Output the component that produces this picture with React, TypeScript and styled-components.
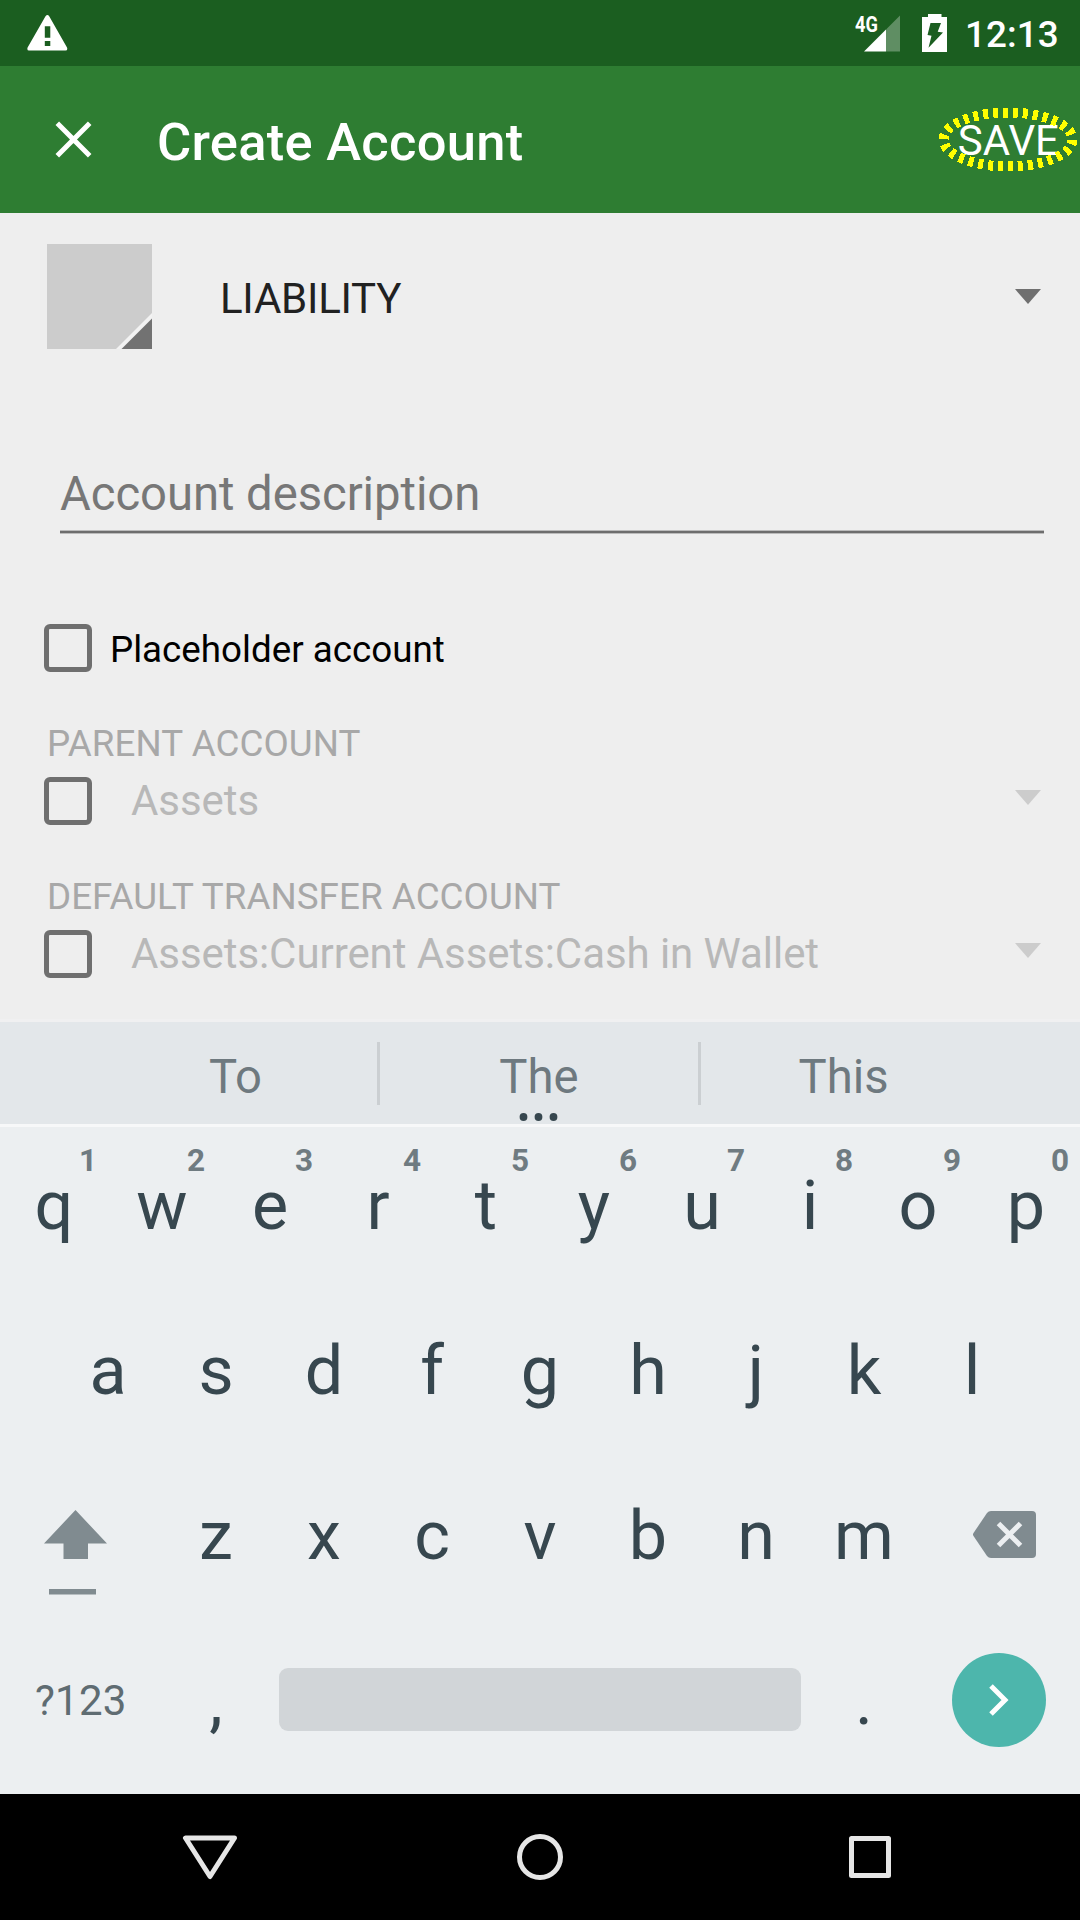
import React from "react";
import styled, { createGlobalStyle } from "styled-components";

const Global = createGlobalStyle`
  * { box-sizing: border-box; }
  body { margin: 0; background: #eeeeee; }
  svg { display: block; flex: none; }
`;

const Screen = styled.div`
  width: 1080px;
  height: 1920px;
  display: flex;
  flex-direction: column;
  overflow: hidden;
  background: #eeeeee;
  font-family: Roboto, "Noto Sans", sans-serif;
  white-space: nowrap;
`;

const StatusBar = styled.header`
  height: 66px;
  display: flex;
  align-items: flex-start;
  justify-content: space-between;
  padding: 0 22px 0 27px;
  background: #1b5e20;
  color: #fff;
`;

const StatusIcons = styled.div`
  display: flex;
  align-items: flex-start;
`;

const Network = styled.span`
  width: 9px;
  padding-top: 11px;
  font-size: 22.5px;
  line-height: 26px;
  font-weight: 700;
  transform: scaleX(0.81);
  transform-origin: left;
`;

const Clock = styled.span`
  margin-left: 18px;
  width: 93px;
  line-height: 69px;
  font-size: 36.75px;
  font-weight: 500;
  letter-spacing: 0.1px;
`;

const AppBar = styled.div`
  height: 147px;
  display: flex;
  align-items: center;
  padding: 0 21px 0 55px;
  background: #2e7d32;
  color: #fff;
`;

const Title = styled.h1`
  flex: 1;
  margin: 0 0 0 65px;
  padding-top: 4px;
  font-size: 52.5px;
  line-height: 62px;
  font-weight: 500;
  letter-spacing: 0.26px;
`;

const SaveButton = styled.button`
  position: relative;
  border: 0;
  padding: 2px 0 0;
  background: none;
  color: #fff;
  font: 400 42px/50px Roboto, sans-serif;
`;

const Highlight = styled.svg`
  position: absolute;
  left: -20px;
  top: -7px;
  overflow: visible;
  pointer-events: none;
`;

const Form = styled.main`
  height: 806px;
  display: flex;
  flex-direction: column;
  padding: 31px 36px 0 44px;
`;

const TypeRow = styled.div`
  height: 105px;
  display: flex;
  align-items: center;
  padding-left: 3px;
`;

const TypeLabel = styled.span`
  flex: 1;
  margin-left: 68px;
  padding-top: 4px;
  font-size: 42px;
  line-height: 50px;
  letter-spacing: -0.25px;
  color: #212121;
`;

const CaretBox = styled.span<{ $raise?: number; $faded?: boolean }>`
  margin-right: 3px;
  padding-bottom: ${(p) => p.$raise ?? 0}px;
  color: ${(p) => (p.$faded ? "#cccccc" : "#6f6f6f")};
`;

const DescriptionField = styled.div`
  margin: 111px 0 0 16px;
  width: 984px;
  height: 74px;
  font-size: 47.25px;
  line-height: 68px;
  letter-spacing: -0.06px;
  color: #777777;
  background:
    linear-gradient(#6d6d6d, #6d6d6d) 0 71px / 100% 2px no-repeat,
    linear-gradient(#bbbbbb, #bbbbbb) 0 70px / 100% 4px no-repeat;
`;

const CheckRow = styled.div<{ $gap: number }>`
  height: 48px;
  margin-top: ${(p) => p.$gap}px;
  display: flex;
  align-items: center;
`;

const Checkbox = styled.span`
  width: 48px;
  height: 48px;
  border: 5px solid #6f6f6f;
  border-radius: 6px;
`;

const PlaceholderLabel = styled.span`
  margin-left: 18px;
  padding-top: 3px;
  font-size: 36.75px;
  line-height: 44px;
  color: #000;
`;

const SectionLabel = styled.div<{ $gap: number }>`
  height: 44px;
  margin: ${(p) => p.$gap}px 0 0 3px;
  font-size: 36.75px;
  line-height: 46px;
  letter-spacing: 0.06px;
  color: #a8a8a8;
`;

const AccountName = styled.span`
  flex: 1;
  margin-left: 39px;
  font-size: 42px;
  line-height: 50px;
  letter-spacing: -0.07px;
  color: #b8b8b8;
`;

const Keyboard = styled.section`
  height: 775px;
  display: flex;
  flex-direction: column;
  background: #eceff1;
`;

const Suggestions = styled.div`
  height: 108px;
  display: flex;
  align-items: center;
  padding: 0 94px;
  border-top: 3px solid #f0f0f1;
  border-bottom: 3px solid #f7f8f9;
  background: #e3e7ea;
`;

const Suggestion = styled.span<{ $width: number }>`
  position: relative;
  width: ${(p) => p.$width}px;
  padding-top: 7px;
  text-align: center;
  font-size: 47.25px;
  line-height: 56px;
  color: #6e797f;
`;

const MoreDots = styled.svg`
  position: absolute;
  left: calc(50% - 20px);
  top: 70px;
`;

const Divider = styled.span`
  width: 3px;
  height: 63px;
  background: #cbcfd2;
`;

const KeyRow = styled.div<{ $inset?: number }>`
  height: 165px;
  display: flex;
  padding: 0 ${(p) => p.$inset ?? 0}px;
`;

const Key = styled.span`
  position: relative;
  width: 108px;
  text-align: center;
  font-size: 68.25px;
  line-height: 159px;
  color: #37474f;
`;

const Hint = styled.sup`
  position: absolute;
  top: 15px;
  right: 11px;
  font-size: 31.5px;
  line-height: 38px;
  font-weight: 700;
  color: #6f7b81;
`;

const WideKey = styled.span<{ $top: number; $left: number }>`
  width: 162px;
  padding: ${(p) => p.$top}px 0 0 ${(p) => p.$left}px;
`;

const SymbolsKey = styled(WideKey)`
  font-size: 42px;
  line-height: 50px;
  letter-spacing: 0.25px;
  color: #5f6c72;
`;

const SpaceKey = styled.span`
  width: 522px;
  height: 63px;
  margin: 46px 9px 0;
  border-radius: 9px;
  background: #d1d5d8;
`;

const EnterKey = styled.span`
  width: 94px;
  height: 94px;
  margin: 31px 0 0 34px;
  display: flex;
  align-items: center;
  justify-content: center;
  border-radius: 50%;
  background: #4db6ac;
`;

const NavBar = styled.nav`
  height: 126px;
  display: grid;
  grid-template-columns: 60px 60px 60px;
  align-items: center;
  justify-content: center;
  column-gap: 270px;
  background: #000;
`;

const Caret = ({ raise, faded }: { raise?: number; faded?: boolean }) => (
  <CaretBox $raise={raise} $faded={faded}>
    <svg width="26" height="15" viewBox="0 0 26 15">
      <path d="M0 0h26L13 15z" fill="currentColor" />
    </svg>
  </CaretBox>
);

const accounts = [
  { label: "PARENT ACCOUNT", value: "Assets", gap: 49 },
  { label: "DEFAULT TRANSFER ACCOUNT", value: "Assets:Current Assets:Cash in Wallet", gap: 49 },
];

export default function App() {
  return (
    <Screen>
      <Global />
      <StatusBar>
        <svg width="41" height="66" viewBox="0 0 41 66">
          <path
            fill="#fff"
            fillRule="evenodd"
            d="M18.5 16.2Q20.5 13.6 22.2 16.2L40 47.5Q41 50.5 38.5 50.5H2Q-.3 50.5.6 47.5zM17.8 26.3v11.4h5.5V26.3zM17.8 41v5h5.5v-5z"
          />
        </svg>
        <StatusIcons>
          <Network>4G</Network>
          <svg width="36" height="66" viewBox="0 0 36 66">
            <path d="M22 29.5L36.5 15v36.5H22z" fill="#fff" opacity=".3" />
            <path d="M0 51.5L22 29.5v22z" fill="#fff" />
          </svg>
          <svg width="47" height="66" viewBox="0 0 47 66">
            <path
              fill="#fff"
              fillRule="evenodd"
              d="M28 14h13.5v3H47v35H22V17h6zM30.5 23l-3 12 4 .7-3 12L43 32.5l-5.3-.8L41 23z"
            />
          </svg>
          <Clock>12:13</Clock>
        </StatusIcons>
      </StatusBar>

      <AppBar>
        <svg width="37" height="37" viewBox="0 0 37 37">
          <path d="M2.3 2.3l32.4 32.4M34.7 2.3L2.3 34.7" stroke="#fff" strokeWidth="5" />
        </svg>
        <Title>Create Account</Title>
        <SaveButton>
          SAVE
          <Highlight width="140" height="66" viewBox="0 0 140 66">
            <ellipse
              cx="70"
              cy="32.5"
              rx="64.5"
              ry="27"
              fill="none"
              stroke="#ffff00"
              strokeWidth="10"
              pathLength="300"
              strokeDasharray="5 5"
              shapeRendering="crispEdges"
            />
          </Highlight>
        </SaveButton>
      </AppBar>

      <Form>
        <TypeRow>
          <svg width="105" height="105" viewBox="0 0 105 105">
            <path d="M0 0h105v105H0z" fill="#cccccc" />
            <path d="M105 69v36H69z" fill="#f2f2f2" />
            <path d="M105 74.5V105H74.5z" fill="#727272" />
          </svg>
          <TypeLabel>LIABILITY</TypeLabel>
          <Caret />
        </TypeRow>
        <DescriptionField>Account description</DescriptionField>
        <CheckRow $gap={90}>
          <Checkbox />
          <PlaceholderLabel>Placeholder account</PlaceholderLabel>
        </CheckRow>
        {accounts.map((a) => (
          <React.Fragment key={a.label}>
            <SectionLabel $gap={a.gap}>{a.label}</SectionLabel>
            <CheckRow $gap={12}>
              <Checkbox />
              <AccountName>{a.value}</AccountName>
              <Caret raise={8} faded />
            </CheckRow>
          </React.Fragment>
        ))}
      </Form>

      <Keyboard>
        <Suggestions>
          <Suggestion $width={283}>To</Suggestion>
          <Divider />
          <Suggestion $width={318}>
            The
            <MoreDots width="40" height="10" viewBox="0 0 40 10">
              <g fill="#37474f">
                <circle cx="4.5" cy="5" r="3.9" />
                <circle cx="19.5" cy="5" r="3.9" />
                <circle cx="34.5" cy="5" r="3.9" />
              </g>
            </MoreDots>
          </Suggestion>
          <Divider />
          <Suggestion $width={285}>This</Suggestion>
        </Suggestions>
        <KeyRow>
          {[..."qwertyuiop"].map((c, i) => (
            <Key key={c}>
              {c}
              <Hint>{(i + 1) % 10}</Hint>
            </Key>
          ))}
        </KeyRow>
        <KeyRow $inset={54}>
          {[..."asdfghjkl"].map((c) => (
            <Key key={c}>{c}</Key>
          ))}
        </KeyRow>
        <KeyRow>
          <WideKey $top={53} $left={44}>
            <svg width="63" height="86" viewBox="0 0 63 86" fill="#808b90">
              <path d="M31.5 0L63 33.5H44V49H19.5V33.5H0z" />
              <path d="M5 79h47v5.500H5z" />
            </svg>
          </WideKey>
          {[..."zxcvbnm"].map((c) => (
            <Key key={c}>{c}</Key>
          ))}
          <WideKey $top={54} $left={55}>
            <svg width="63" height="47" viewBox="0 0 63 47">
              <path
                d="M18 0H59Q63 0 63 4V43Q63 47 59 47H18Q15.500 47 14 45L.5 25Q-.5 23.500 .5 22L14 2Q15.500 0 18 0z"
                fill="#808b90"
              />
              <path d="M25.500 12.500l22 22M47.500 12.500l-22 22" stroke="#eceff1" strokeWidth="5" />
            </svg>
          </WideKey>
        </KeyRow>
        <KeyRow>
          <SymbolsKey $top={54} $left={35}>?123</SymbolsKey>
          <Key>,</Key>
          <SpaceKey />
          <Key>.</Key>
          <EnterKey>
            <svg width="20" height="32" viewBox="0 0 20 32">
              <path d="M2 2l14 14L2 30" fill="none" stroke="#fff" strokeWidth="5" />
            </svg>
          </EnterKey>
        </KeyRow>
      </Keyboard>

      <NavBar>
        <svg width="60" height="60" viewBox="0 0 60 60" fill="none" stroke="#e6e6e6">
          <path d="M5.500 11h49L30 49.500z" strokeWidth="5" strokeLinejoin="round" />
        </svg>
        <svg width="60" height="60" viewBox="0 0 60 60" fill="none" stroke="#e6e6e6">
          <circle cx="30" cy="30" r="20.500" strokeWidth="5" />
        </svg>
        <svg width="60" height="60" viewBox="0 0 60 60" fill="none" stroke="#e6e6e6">
          <rect x="11.500" y="11.500" width="37" height="37" strokeWidth="5" strokeLinejoin="round" />
        </svg>
      </NavBar>
    </Screen>
  );
}
